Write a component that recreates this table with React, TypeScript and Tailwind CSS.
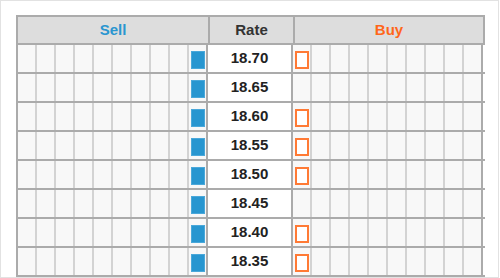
const rows = [
  { rate: "18.70", sell: true, buy: true },
  { rate: "18.65", sell: true, buy: false },
  { rate: "18.60", sell: true, buy: true },
  { rate: "18.55", sell: true, buy: true },
  { rate: "18.50", sell: true, buy: true },
  { rate: "18.45", sell: true, buy: false },
  { rate: "18.40", sell: true, buy: true },
  { rate: "18.35", sell: true, buy: true },
];

const nine = [0, 1, 2, 3, 4, 5, 6, 7, 8];

function Row({ rate, sell, buy }: { rate: string; sell: boolean; buy: boolean }) {
  return (
    <div className="flex h-[29px] border-b-2 border-[#ababab]">
      {nine.map((i) => (
        <div key={i} className="w-[19px] h-full bg-[#f8f8f8] border-r-2 border-[#d3d3d3]" />
      ))}
      <div className="w-[19px] h-full bg-[#f8f8f8] border-r-2 border-[#ababab] pl-[2px] pt-[6px]">
        {sell && <div className="w-[14px] h-[18px] bg-[#2896d0] border border-[#4aa8da]" />}
      </div>
      <div className="w-[85px] h-full bg-white border-r-2 border-[#ababab] flex items-center justify-center text-[15px] font-bold text-[#222]">
        {rate}
      </div>
      <div className="w-[19px] h-full bg-[#f8f8f8] border-r-2 border-[#d3d3d3] pl-[2px] pt-[6px]">
        {buy && <div className="w-[14px] h-[18px] bg-white border-2 border-[#ff7a35]" />}
      </div>
      {nine.map((i) => (
        <div
          key={i}
          className={
            i === 8
              ? "w-[19px] h-full bg-[#f8f8f8] border-r-2 border-[#ababab]"
              : "w-[19px] h-full bg-[#f8f8f8] border-r-2 border-[#d3d3d3]"
          }
        />
      ))}
    </div>
  );
}

export default function App() {
  return (
    <div
      className="w-[499px] h-[278px] bg-white border border-[#e2e2e2] overflow-hidden pl-[15px] pt-[14px]"
      style={{ fontFamily: '"Liberation Sans", Arial, sans-serif' }}
    >
      <div className="w-[469px] border-l-2 border-t-2 border-[#ababab]">
        {/* header */}
        <div className="flex h-[28px] bg-[#dddddd] border-b-2 border-[#ababab] text-[15px] font-bold">
          <div className="w-[192px] flex items-center justify-center border-r-2 border-[#ababab] text-[#2a96d0]">
            Sell
          </div>
          <div className="w-[85px] flex items-center justify-center border-r-2 border-[#ababab] text-[#333]">
            Rate
          </div>
          <div className="w-[190px] flex items-center justify-center border-r-2 border-[#ababab] text-[#ff661a]">
            Buy
          </div>
        </div>
        {rows.map((r) => (
          <Row key={r.rate} {...r} />
        ))}
      </div>
    </div>
  );
}
